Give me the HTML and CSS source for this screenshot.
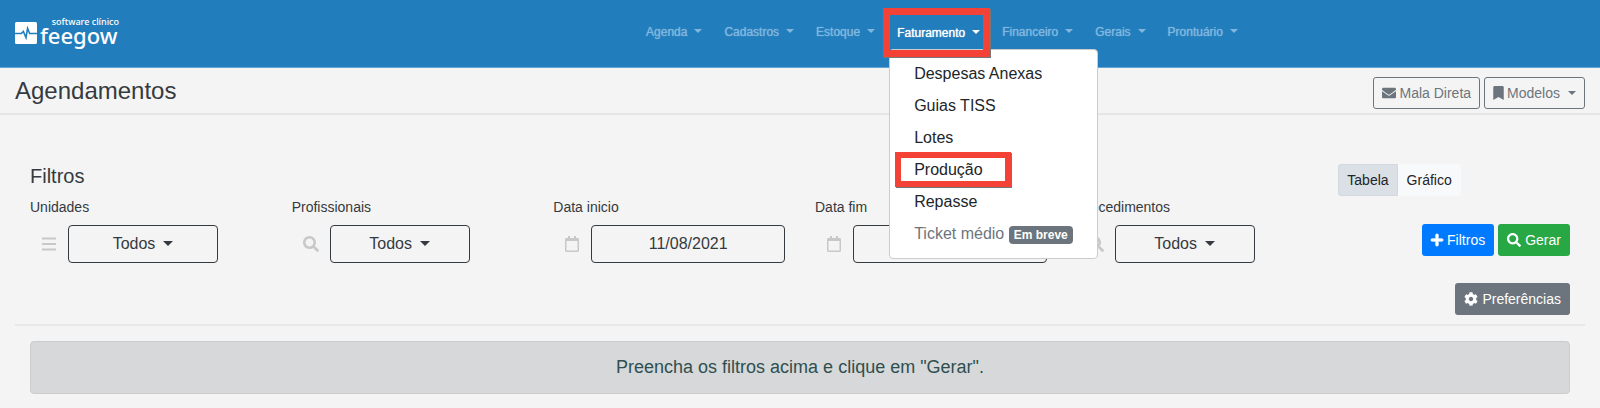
FILE: index.html
```html
<!DOCTYPE html>
<html lang="pt-BR">
<head>
<meta charset="utf-8">
<title>Feegow - Agendamentos</title>
<link rel="stylesheet" href="styles.css">
</head>
<body>
<svg class="sprite" aria-hidden="true">
  <symbol id="i-search" viewBox="0 0 512 512"><path fill="currentColor" d="M505 442.700L405.300 343c-4.500-4.500-10.600-7-17-7H372c27.600-35.300 44-79.700 44-128C416 93.100 322.900 0 208 0S0 93.100 0 208s93.100 208 208 208c48.300 0 92.700-16.400 128-44v16.300c0 6.400 2.500 12.500 7 17l99.700 99.700c9.400 9.400 24.600 9.400 33.900 0l28.300-28.300c9.400-9.400 9.400-24.600.1-34zM208 336c-70.700 0-128-57.200-128-128 0-70.700 57.200-128 128-128 70.700 0 128 57.200 128 128 0 70.700-57.200 128-128 128z"/></symbol>
  <symbol id="i-calendar" viewBox="0 0 448 512"><path fill="currentColor" d="M400 64h-48V12c0-6.600-5.400-12-12-12h-40c-6.600 0-12 5.400-12 12v52H160V12c0-6.600-5.400-12-12-12h-40c-6.600 0-12 5.400-12 12v52H48C21.500 64 0 85.500 0 112v352c0 26.500 21.500 48 48 48h352c26.500 0 48-21.500 48-48V112c0-26.500-21.500-48-48-48zm-6 400H54c-3.300 0-6-2.700-6-6V160h352v298c0 3.300-2.700 6-6 6z"/></symbol>
</svg>

<header class="topbar">
  <a class="brand" href="#" aria-label="feegow software clínico">
    <svg class="brand-mark" viewBox="0 0 21 21" aria-hidden="true">
      <rect width="21" height="21" rx="1.500" fill="#fff"/>
      <path d="M0 11h6l2-2 2.500 6 1.500-9 2 5h7" fill="none" stroke="#227dbc" stroke-width="1.500"/>
    </svg>
    <span class="brand-text"><small>software clínico</small><strong>feegow</strong></span>
  </a>
  <nav class="menu">
    <button class="menu-link caret">Agenda</button>
    <button class="menu-link caret">Cadastros</button>
    <button class="menu-link caret">Estoque</button>
    <div class="menu-item">
      <button class="menu-link caret active" aria-expanded="true">Faturamento</button>
      <div class="dropdown">
        <a href="#">Despesas Anexas</a>
        <a href="#">Guias TISS</a>
        <a href="#">Lotes</a>
        <a href="#" class="marked">Produção</a>
        <a href="#">Repasse</a>
        <a href="#" class="disabled">Ticket médio <span class="badge">Em breve</span></a>
      </div>
    </div>
    <button class="menu-link caret">Financeiro</button>
    <button class="menu-link caret">Gerais</button>
    <button class="menu-link caret">Prontuário</button>
  </nav>
</header>

<div class="titlebar">
  <h1>Agendamentos</h1>
  <div class="actions">
    <button class="btn outline"><svg class="ic" viewBox="0 0 512 512" aria-hidden="true"><path fill="currentColor" d="M502.300 190.800c3.900-3.100 9.700-.2 9.700 4.700V400c0 26.500-21.500 48-48 48H48c-26.500 0-48-21.500-48-48V195.600c0-5 5.700-7.800 9.700-4.700 22.400 17.400 52.100 39.500 154.100 113.600 21.100 15.400 56.700 47.800 92.200 47.600 35.700.3 72-32.800 92.300-47.600 102-74.100 131.600-96.300 154-113.700zM256 320c23.200.4 56.600-29.200 73.400-41.400 132.700-96.300 142.800-104.700 173.400-128.700 5.800-4.500 9.200-11.500 9.200-18.900v-19c0-26.500-21.500-48-48-48H48c-26.500 0-48 21.500-48 48v19c0 7.400 3.400 14.300 9.200 18.900 30.600 23.900 40.700 32.400 173.400 128.700 16.800 12.200 50.200 41.800 73.400 41.400z"/></svg>Mala Direta</button>
    <button class="btn outline caret"><svg class="ic narrow" viewBox="0 0 384 512" aria-hidden="true"><path fill="currentColor" d="M0 512V48C0 21.500 21.500 0 48 0h288c26.500 0 48 21.500 48 48v464L192 400 0 512z"/></svg>Modelos</button>
  </div>
</div>

<main class="content">
  <form class="filters">
    <h2>Filtros</h2>
    <div class="toggle">
      <button type="button" class="btn light on">Tabela</button><button type="button" class="btn light">Gráfico</button>
    </div>
    <div class="field">
      <label for="unidades">Unidades</label>
      <div class="group">
        <span class="addon"><svg class="ic16" viewBox="0 0 16 16" aria-hidden="true"><path d="M1 2.500h14M1 8h14M1 13.500h14" stroke="currentColor" stroke-width="2"/></svg></span>
        <button type="button" id="unidades" class="control wide caret">Todos</button>
      </div>
    </div>
    <div class="field">
      <label for="profissionais">Profissionais</label>
      <div class="group">
        <span class="addon"><svg class="ic16" aria-hidden="true"><use href="#i-search"/></svg></span>
        <button type="button" id="profissionais" class="control caret">Todos</button>
      </div>
    </div>
    <div class="field">
      <label for="inicio">Data inicio</label>
      <div class="group">
        <span class="addon"><svg class="ic16" aria-hidden="true"><use href="#i-calendar"/></svg></span>
        <input id="inicio" class="control date" type="text" value="11/08/2021">
      </div>
    </div>
    <div class="field">
      <label for="fim">Data fim</label>
      <div class="group">
        <span class="addon"><svg class="ic16" aria-hidden="true"><use href="#i-calendar"/></svg></span>
        <input id="fim" class="control date" type="text">
      </div>
    </div>
    <div class="field">
      <label for="procedimentos">Procedimentos</label>
      <div class="group">
        <span class="addon"><svg class="ic16" aria-hidden="true"><use href="#i-search"/></svg></span>
        <button type="button" id="procedimentos" class="control caret">Todos</button>
      </div>
    </div>
    <div class="submit">
      <button type="button" class="btn blue"><svg class="ic plus" viewBox="0 0 448 512" aria-hidden="true"><path fill="currentColor" stroke="currentColor" stroke-width="24" d="M416 208H272V64c0-17.700-14.300-32-32-32h-32c-17.700 0-32 14.300-32 32v144H32c-17.700 0-32 14.300-32 32v32c0 17.700 14.300 32 32 32h144v144c0 17.700 14.300 32 32 32h32c17.700 0 32-14.300 32-32V304h144c17.700 0 32-14.300 32-32v-32c0-17.700-14.300-32-32-32z"/></svg>Filtros</button>
      <button type="button" class="btn green"><svg class="ic" aria-hidden="true"><use href="#i-search"/></svg>Gerar</button>
    </div>
  </form>
  <div class="prefs">
    <button class="btn gray"><svg class="ic" viewBox="0 0 512 512" aria-hidden="true"><path fill="currentColor" d="M487.400 315.700l-42.600-24.600c4.300-23.200 4.300-47 0-70.200l42.600-24.600c4.900-2.800 7.100-8.600 5.500-14-11.100-35.600-30-67.800-54.700-94.600-3.800-4.100-10-5.100-14.800-2.300L380.800 110c-17.900-15.400-38.500-27.300-60.800-35.100V25.800c0-5.600-3.900-10.500-9.400-11.700-36.700-8.200-74.300-7.800-109.200 0-5.500 1.200-9.400 6.100-9.400 11.700V75c-22.200 7.900-42.800 19.800-60.800 35.100L88.700 85.500c-4.900-2.800-11-1.900-14.800 2.300-24.700 26.700-43.600 58.900-54.700 94.600-1.700 5.400.6 11.200 5.500 14L67.300 221c-4.300 23.200-4.300 47 0 70.200l-42.600 24.600c-4.900 2.800-7.100 8.600-5.500 14 11.100 35.600 30 67.800 54.700 94.600 3.800 4.100 10 5.100 14.800 2.300l42.600-24.600c17.900 15.400 38.500 27.300 60.800 35.100v49.200c0 5.600 3.900 10.500 9.400 11.700 36.700 8.200 74.300 7.800 109.200 0 5.500-1.200 9.400-6.100 9.400-11.700v-49.200c22.200-7.900 42.800-19.800 60.800-35.100l42.600 24.600c4.900 2.800 11 1.900 14.800-2.300 24.700-26.700 43.600-58.900 54.700-94.600 1.500-5.500-.7-11.300-5.600-14.100zM256 336c-44.100 0-80-35.900-80-80s35.900-80 80-80 80 35.900 80 80-35.900 80-80 80z"/></svg>Preferências</button>
  </div>
  <hr>
  <p class="notice">Preencha os filtros acima e clique em "Gerar".</p>
</main>
</body>
</html>
```
FILE: styles.css
```css
* { box-sizing: border-box; }

body {
  margin: 0;
  background: #f4f4f4;
  color: #343a40;
  font: 16px/24px "Liberation Sans", Arial, sans-serif;
}

button, input { font: inherit; color: inherit; cursor: pointer; }
a { color: inherit; text-decoration: none; }
svg { flex: none; }
.sprite { position: absolute; width: 0; height: 0; }

.caret::after {
  content: "";
  display: inline-block;
  margin-left: 8px;
  border: 4px solid transparent;
  border-top-color: currentColor;
  border-bottom: 0;
  vertical-align: 3px;
}

/* Top bar */
.topbar {
  display: flex;
  align-items: center;
  height: 68px;
  padding: 0 15px;
  background: #227dbc;
  border-bottom: 1px solid #64a4d1;
}
.brand {
  display: flex;
  flex: 0 0 284px;
  gap: 3px;
  align-items: center;
  color: #fff;
  font-family: "Noto Sans", "Open Sans", sans-serif;
}
.brand-mark { width: 22px; height: 22px; margin-bottom: 2px; }
.brand-text { display: flex; flex-direction: column; width: 79px; padding-bottom: 8px; }
.brand-text small { font-size: 9px; line-height: 10px; font-weight: 500; text-align: right; white-space: nowrap; }
.brand-text strong { font-size: 22px; line-height: 16px; font-weight: 500; }

.menu { display: flex; flex: 1; justify-content: center; gap: 22px; padding-bottom: 3px; }
.menu-item { position: relative; }
.menu-link {
  padding: 0;
  border: 0;
  background: none;
  color: #7fb7df;
  font-size: 12px;
  line-height: 24px;
  text-shadow: 0 0 1px currentColor;
  white-space: nowrap;
}
.menu-link.caret::after { margin-left: 7px; border-width: 4px 4px 0; }
.menu-link.active { color: #fff; }
.menu-link.active::before {
  content: "";
  position: absolute;
  z-index: 3;
  inset: -12px -10px -12px -14px;
  border: 7px solid #f44336;
  box-shadow: 1px 1px 0 #777;
}

.dropdown {
  position: absolute;
  z-index: 2;
  top: 29px;
  left: -8px;
  padding: 8px 0;
  border: 1px solid #ccc;
  border-radius: 4px;
  background: #fff;
  color: #212529;
}
.dropdown a { display: block; position: relative; padding: 4px 24px; white-space: nowrap; }
.dropdown .disabled { color: #6c757d; }
.dropdown .marked::after {
  content: "";
  position: absolute;
  inset: -2px 86px -1px 5px;
  border: 6px solid #f44336;
  box-shadow: 1px 1px 0 #777;
}
.badge {
  display: inline-block;
  padding: 3px 5px;
  border-radius: 4px;
  background: #6c757d;
  color: #fff;
  font-size: 12px;
  font-weight: bold;
  line-height: 12px;
}

/* Page title */
.titlebar {
  display: flex;
  align-items: flex-start;
  justify-content: space-between;
  padding: 9px 15px 4px;
  border-bottom: 2px solid #e6e6e6;
}
h1, h2 { margin: 0; font-weight: normal; }
h1 { font-size: 24px; line-height: 28px; color: #343a40; }
.actions { display: flex; gap: 4px; }

.btn {
  display: inline-flex;
  align-items: center;
  padding: 4px 8px;
  border: 1px solid transparent;
  border-radius: 3px;
  font-size: 14px;
  line-height: 22px;
  color: #fff;
  white-space: nowrap;
}
.ic { width: 14px; height: 14px; margin-right: 4px; }
.ic.narrow { width: 11px; }
.ic.plus { width: 12px; overflow: visible; }
.outline { border-color: #6c757d; background: none; color: #6c757d; }
.outline .ic { margin-right: 3px; }
.blue { background: #007bff; }
.green { background: #28a745; }
.gray { background: #6c757d; }
.light { background: #f8f9fa; color: #212529; border-radius: 0 3px 3px 0; }
.light.on { background: #dae0e5; border-color: #d3d9df; border-radius: 3px 0 0 3px; }

/* Filters */
.content { padding: 49px 15px 0; }
.filters { display: grid; grid-template-columns: repeat(6, 1fr); }
.filters > * { padding: 0 15px; }
h2 { grid-column: span 5; font-size: 20px; line-height: 24px; }
.toggle { display: flex; }
label { display: block; margin-bottom: 7px; font-size: 14px; line-height: 22px; }
.group { display: flex; }
.addon { display: flex; flex: 0 0 38px; align-items: center; justify-content: center; color: #c8c8c8; }
.ic16 { width: 16px; height: 16px; }
.control {
  width: 140px;
  height: 38px;
  padding: 0 12px;
  border: 1px solid #343a40;
  border-radius: 4px;
  background: none;
  text-align: center;
}
.control.wide { width: 150px; }
.control.date { flex: 1; min-width: 0; }
.control.caret::after { border-width: 5px 5px 0; }
.filters .submit { display: flex; justify-content: flex-end; align-items: flex-start; gap: 4px; padding-top: 28px; }
.prefs { display: flex; justify-content: flex-end; padding: 20px 15px 9px; }
hr { margin: 0 0 15px; border: 0; border-top: 2px solid #e8e8e8; }
.notice {
  margin: 0 15px;
  padding: 13px 20px 14px;
  border: 1px solid #cbcccd;
  border-radius: 4px;
  background: #d6d8d9;
  color: #2f4f4f;
  font-size: 18px;
  text-align: center;
}
```
